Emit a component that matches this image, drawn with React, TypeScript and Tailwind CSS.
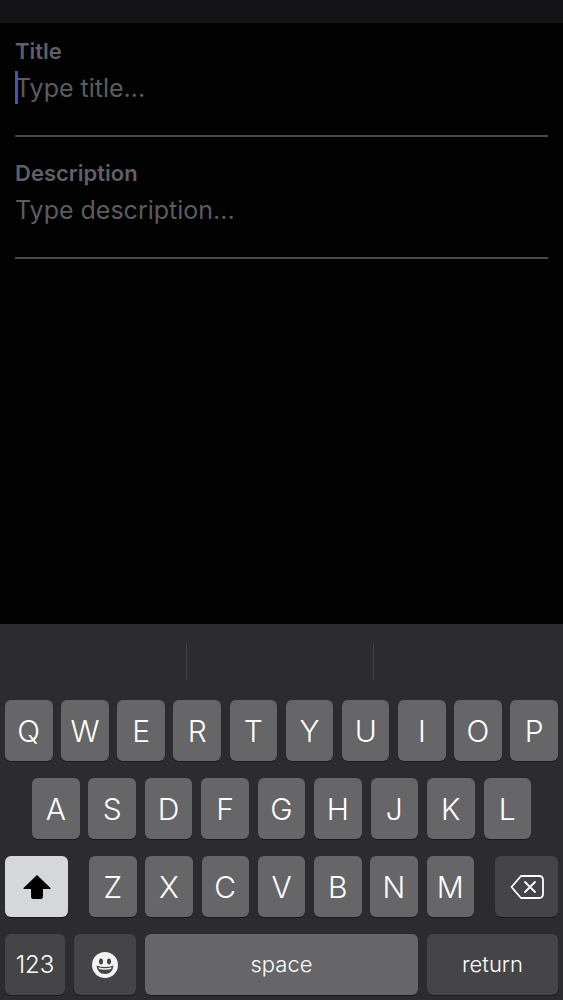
const row1 = ["Q", "W", "E", "R", "T", "Y", "U", "I", "O", "P"];
const row2 = ["A", "S", "D", "F", "G", "H", "J", "K", "L"];
const row3 = ["Z", "X", "C", "V", "B", "N", "M"];

function Key({ label }: { label: string }) {
  return (
    <div className="flex h-[61px] w-[47.5px] shrink-0 items-center justify-center rounded-[6px] bg-[#666668] text-[30px] font-light leading-none text-white shadow-[0_1px_0_#1a1a1c]">
      {label}
    </div>
  );
}

function Field({ label, placeholder, caret }: { label: string; placeholder: string; caret?: boolean }) {
  return (
    <div className="h-[100px] border-b-2 border-[#49494b]">
      <div className="text-[22px] font-semibold leading-[28px] text-[#5e5f68]">{label}</div>
      <div className="relative mt-[5px]">
        {caret && <div className="absolute left-0 top-[1px] h-[33px] w-[3px] bg-[#4356c0]" />}
        <input
          readOnly
          placeholder={placeholder}
          className="block h-[36px] w-full bg-transparent text-[25px] leading-[36px] outline-none placeholder:text-[#5c5c5e]"
        />
      </div>
    </div>
  );
}

export default function App() {
  return (
    <div className="flex h-[1000px] w-[563px] flex-col overflow-hidden bg-[#020203] font-['Inter',sans-serif]">
      <div className="h-[23px] shrink-0 bg-[#141416]" />
      <div className="flex flex-1 flex-col gap-[22px] px-[15px] pt-[14px]">
        <Field label="Title" placeholder="Type title..." caret />
        <Field label="Description" placeholder="Type description..." />
      </div>
      <div className="h-[376px] shrink-0 bg-[#2c2c2e]">
        <div className="flex h-[76px] items-center">
          <div className="h-[36px] w-[187px] border-r border-[#444446]" />
          <div className="h-[36px] w-[187px] border-r border-[#444446]" />
        </div>
        <div className="flex flex-col gap-[17px] px-[5px]">
          <div className="flex justify-between">
            {row1.map((k) => (
              <Key key={k} label={k} />
            ))}
          </div>
          <div className="flex justify-between px-[27px]">
            {row2.map((k) => (
              <Key key={k} label={k} />
            ))}
          </div>
          <div className="flex justify-between">
            <div className="flex h-[61px] w-[63px] items-center justify-center rounded-[6px] bg-[#d5d7da] shadow-[0_1px_0_#1a1a1c]">
              <svg width="28" height="26" viewBox="0 0 28 26">
                <path d="M14 1 L27.5 14 Q28 15 27 15 H20 V22.5 Q20 25 17.5 25 H10.5 Q8 25 8 22.5 V15 H1 Q0 15 .5 14 Z" fill="#000" />
              </svg>
            </div>
            <div className="flex gap-[8.75px]">
              {row3.map((k) => (
                <Key key={k} label={k} />
              ))}
            </div>
            <div className="flex h-[61px] w-[63px] items-center justify-center rounded-[6px] bg-[#454547] shadow-[0_1px_0_#1a1a1c]">
              <svg width="34" height="26" viewBox="0 0 34 26" fill="none" stroke="#fff" strokeWidth="1.8" strokeLinejoin="round" strokeLinecap="round">
                <path d="M11 2 H29 Q33 2 33 6 V20 Q33 24 29 24 H11 L1.5 13 Z" />
                <path d="M15 8 L25 18 M25 8 L15 18" />
              </svg>
            </div>
          </div>
          <div className="flex gap-[9px]">
            <div className="flex h-[61px] w-[60px] items-center justify-center rounded-[6px] bg-[#454547] text-[24px] font-light text-white shadow-[0_1px_0_#1a1a1c]">
              123
            </div>
            <div className="flex h-[61px] w-[62px] items-center justify-center rounded-[6px] bg-[#454547] shadow-[0_1px_0_#1a1a1c]">
              <svg width="26" height="26" viewBox="0 0 26 26">
                <circle cx="13" cy="13" r="13" fill="#f2f2f2" />
                <ellipse cx="9" cy="9.5" rx="2" ry="3" fill="#454547" />
                <ellipse cx="17" cy="9.5" rx="2" ry="3" fill="#454547" />
                <path d="M4.5 13.5 Q13 16.5 21.5 13.5 Q20.5 22 13 22 Q5.5 22 4.5 13.5 Z" fill="#454547" />
                <path d="M6.5 15.2 Q13 17.2 19.5 15.2 L19 17 Q13 18.6 7 17 Z" fill="#f2f2f2" />
              </svg>
            </div>
            <div className="flex h-[61px] w-[273px] items-center justify-center rounded-[6px] bg-[#666668] text-[22px] font-light text-white shadow-[0_1px_0_#1a1a1c]">
              space
            </div>
            <div className="flex h-[61px] flex-1 items-center justify-center rounded-[6px] bg-[#454547] text-[22px] font-light text-white shadow-[0_1px_0_#1a1a1c]">
              return
            </div>
          </div>
        </div>
      </div>
    </div>
  );
}
